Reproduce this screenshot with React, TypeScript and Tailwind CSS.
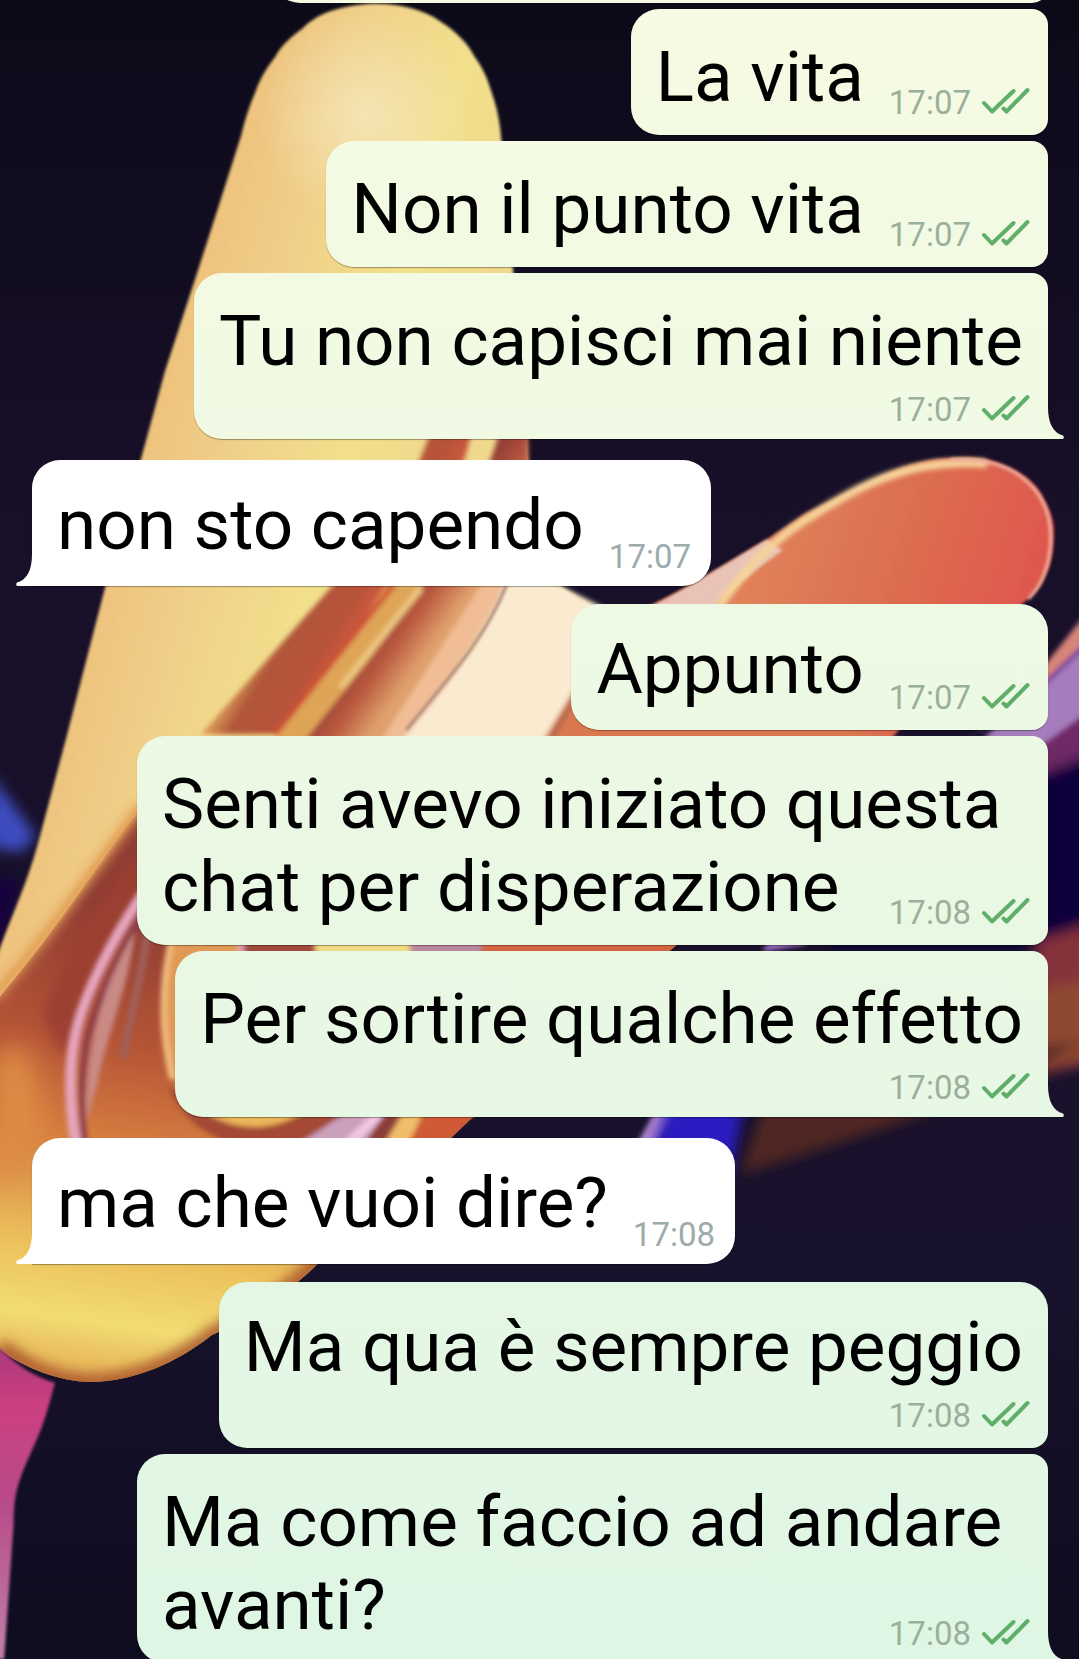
import React from 'react';

type Message = {
  lines: string[];
  time: string;
  out?: boolean;
  first?: boolean;
  last?: boolean;
  stacked?: boolean;
  tail?: string;
};

const messages: Message[] = [
  { lines: ['La vita'], time: '17:07', out: true },
  { lines: ['Non il punto vita'], time: '17:07', out: true },
  { lines: ['Tu non capisci mai niente'], time: '17:07', out: true, last: true, stacked: true, tail: 'fill-[#f0fae3]' },
  { lines: ['non sto capendo'], time: '17:07', first: true, last: true, tail: 'fill-white' },
  { lines: ['Appunto'], time: '17:07', out: true, first: true },
  { lines: ['Senti avevo iniziato questa', 'chat per disperazione'], time: '17:08', out: true },
  { lines: ['Per sortire qualche effetto'], time: '17:08', out: true, last: true, stacked: true, tail: 'fill-[#e7f7e4]' },
  { lines: ['ma che vuoi dire?'], time: '17:08', first: true, last: true, tail: 'fill-white' },
  { lines: ['Ma qua è sempre peggio'], time: '17:08', out: true, first: true, stacked: true },
  { lines: ['Ma come faccio ad andare', 'avanti?'], time: '17:08', out: true, last: true, tail: 'fill-[#dff6e4]' },
];

const outBg = 'bg-linear-to-b from-[#f6fbe3] to-[#dff6e4] bg-fixed';

const ReadIcon: React.FC = () => (
  <svg viewBox="0 0 48 28" className="w-12 h-7 mb-2 shrink-0" fill="none" stroke="#5fae6a" strokeWidth="4" strokeLinecap="round" strokeLinejoin="round">
    <path d="M2 16 L10 24.5 L31.5 4" />
    <path d="M21.5 21.5 L24.5 24.5 L45.5 3" />
  </svg>
);

const Bubble: React.FC<{ message: Message }> = ({ message }) => {
  const { lines, time, out, first, last, stacked, tail } = message;

  let corners = 'rounded-[28px]';
  if (out) {
    corners = `rounded-l-[28px] ${first ? 'rounded-tr-[28px]' : 'rounded-tr-2xl'} ${last ? '' : 'rounded-br-2xl'}`;
  } else if (last) {
    corners = 'rounded-t-[28px] rounded-br-[28px]';
  }

  return (
    <div
      className={`relative flex justify-between shadow-[0_1px_1px_rgba(0,0,0,0.35)] ${corners} ${out ? outBg : 'bg-white'} ${
        stacked ? 'flex-col' : 'items-end'
      } ${lines.length > 1 ? 'w-[911px]' : ''}`}
    >
      <p
        className={`shrink-0 pl-[25px] text-[71px] leading-[83px] whitespace-nowrap text-black ${first ? 'pt-[23px]' : 'pt-[26px]'} ${
          stacked ? 'pr-[25px] pb-2' : first ? 'pb-5' : 'pb-[17px]'
        }`}
      >
        {lines.map((line) => (
          <span key={line} className="block">{line}</span>
        ))}
      </p>
      <div
        className={`flex shrink-0 items-end justify-end gap-[11px] ${lines.length > 1 ? '-ml-36' : 'pl-[25px]'} ${out ? 'pr-[18px]' : 'pr-5'} ${
          last ? 'pb-[9px]' : 'pb-3'
        }`}
      >
        <time className={`text-[33px] leading-10 ${out ? 'text-[#9bb09b]' : 'text-[#9dabab]'}`}>{time}</time>
        {out && <ReadIcon />}
      </div>
      {tail && (
        <svg
          viewBox="0 0 16 32"
          className={`absolute bottom-0 w-4 h-8 ${out ? 'left-full' : 'right-full -scale-x-100'} ${tail}`}
        >
          <path d="M0 0 C0 16 5 26 15 28.5 Q16.5 30 15 32 H0 Z" />
        </svg>
      )}
    </div>
  );
};

const Wallpaper: React.FC = () => (
  <svg viewBox="0 0 1020 1568" preserveAspectRatio="xMidYMid slice" className="absolute inset-0 w-full h-full">
    <defs>
      <linearGradient id="night" x1="0" y1="0" x2="0" y2="1">
        <stop offset="0" stopColor="#0c0a19" />
        <stop offset="0.3" stopColor="#180f28" />
        <stop offset="0.75" stopColor="#19122d" />
        <stop offset="1" stopColor="#0e0c1f" />
      </linearGradient>
      <linearGradient id="petal" gradientUnits="userSpaceOnUse" x1="150" y1="300" x2="420" y2="380">
        <stop offset="0" stopColor="#edbf7a" />
        <stop offset="0.35" stopColor="#f0cf88" />
        <stop offset="0.75" stopColor="#f2e08c" />
        <stop offset="1" stopColor="#f0d98c" />
      </linearGradient>
      <radialGradient id="shine" gradientUnits="userSpaceOnUse" cx="345" cy="110" r="100">
        <stop offset="0" stopColor="#f6ebc8" stopOpacity="0.7" />
        <stop offset="1" stopColor="#f6ebc8" stopOpacity="0" />
      </radialGradient>
      <linearGradient id="lobe" gradientUnits="userSpaceOnUse" x1="130" y1="860" x2="70" y2="1290">
        <stop offset="0" stopColor="#8f3c33" />
        <stop offset="0.3" stopColor="#b55536" />
        <stop offset="0.5" stopColor="#d57c3f" />
        <stop offset="0.75" stopColor="#ecc15c" />
        <stop offset="0.9" stopColor="#f2dc72" />
        <stop offset="1" stopColor="#e8b85a" />
      </linearGradient>
      <linearGradient id="red" gradientUnits="userSpaceOnUse" x1="720" y1="480" x2="970" y2="560">
        <stop offset="0" stopColor="#e0825a" />
        <stop offset="0.5" stopColor="#dc6f50" />
        <stop offset="1" stopColor="#df5850" />
      </linearGradient>
      <linearGradient id="foldA" gradientUnits="userSpaceOnUse" x1="245" y1="610" x2="310" y2="650">
        <stop offset="0" stopColor="#dc9a58" />
        <stop offset="0.25" stopColor="#b0563a" />
        <stop offset="0.7" stopColor="#b8523a" />
        <stop offset="1" stopColor="#d05c3e" />
      </linearGradient>
      <linearGradient id="foldB" gradientUnits="userSpaceOnUse" x1="335" y1="610" x2="385" y2="645">
        <stop offset="0" stopColor="#8f3a34" />
        <stop offset="0.5" stopColor="#b9583f" />
        <stop offset="1" stopColor="#e0a06c" />
      </linearGradient>
      <linearGradient id="pink" x1="0" y1="0" x2="0" y2="1">
        <stop offset="0" stopColor="#a8387c" />
        <stop offset="0.2" stopColor="#cc4080" />
        <stop offset="0.5" stopColor="#b84a88" />
        <stop offset="1" stopColor="#c080a8" />
      </linearGradient>
      <filter id="soft">
        <feGaussianBlur stdDeviation="1.5" />
      </filter>
      <filter id="fold">
        <feGaussianBlur stdDeviation="2.5" />
      </filter>
      <filter id="blurry" x="-50%" y="-50%" width="200%" height="200%">
        <feGaussianBlur stdDeviation="6" />
      </filter>
      <filter id="glow" x="-50%" y="-50%" width="200%" height="200%">
        <feGaussianBlur stdDeviation="12" />
      </filter>
      <clipPath id="lobeClip">
        <path d="M131 766 C90 820 60 870 0 942 H-5 V1272 C15 1288 45 1303 80 1306 C120 1308 165 1290 200 1262 C240 1245 280 1215 300 1195 C350 1150 400 1100 447 1056 L640 893 L500 710 L194 710Z" />
      </clipPath>
    </defs>
    <rect width="1020" height="1568" fill="url(#night)" />

    {/* ribbon and glow on the right edge */}
    <g filter="url(#blurry)">
      <path d="M1040 700 L990 725 L900 740 L780 893 H1040Z" fill="#10003a" />
      <path d="M1040 870 L980 890 L960 1020 L1040 1004Z" fill="#86303a" />
      <path d="M1040 925 L980 935 L960 1014 L1040 1000Z" fill="#8f4a30" />
      <path d="M1040 650 L985 690 L960 740 L1040 710Z" fill="#6e2c66" />
    </g>
    <g filter="url(#fold)">
      <path d="M1030 576 L980 638 L905 712 L760 893 L720 900 L800 780 L926 692 L975 655Z" fill="#9a6cc0" />
      <path d="M1030 592 L980 650 L915 712 L975 712 L1030 672Z" fill="#a57cbc" />
      <path d="M1030 576 L985 632 L985 646 L1030 602Z" fill="#d88478" />
      <path d="M1030 606 L985 648" stroke="#6f3a9a" strokeWidth="4" />
      <path d="M600 1085 L625 1040 L650 1040 L618 1085Z" fill="#b087cc" />
    </g>
    <path d="M635 1035 L705 1035 L690 1112 L612 1098Z" fill="#2a1cc0" filter="url(#blurry)" />
    <path d="M725 1035 L1020 985 L980 1008 L860 1058 L700 1110Z" fill="#4f2524" filter="url(#blurry)" />

    {/* blue glow behind the left petal */}
    <path d="M-10 730 L34 790 L20 806 L-10 800Z" fill="#3d4cc0" filter="url(#blurry)" />
    <path d="M-10 830 H20 L0 900 H-10Z" fill="#12003c" filter="url(#blurry)" />

    {/* right petal */}
    <path d="M580 590 C600 578 640 562 671 542 L725 510 L762 485 L825 454 C850 441 875 433 898 433 C915 432 932 433 945 438 C965 445 980 457 986 470 C994 484 997 495 996 507 C996 522 993 535 989 542 C984 555 977 563 967 570 L840 700 L620 893 L447 1056 L397 1056 L540 690Z" fill="url(#red)" filter="url(#soft)" />
    <path d="M600 582 C640 562 680 537 725 510 L740 520 C705 545 680 565 660 590Z" fill="#e9c3b8" filter="url(#soft)" />
    <path d="M930 438 C850 432 800 468 760 492 C730 512 700 540 672 585" stroke="#f6d49a" strokeWidth="8" strokeLinecap="round" fill="none" filter="url(#fold)" />
    <path d="M898 435 C960 430 995 465 993 512 C992 535 986 552 972 566" stroke="#eeb0a0" strokeWidth="3" fill="none" filter="url(#soft)" />

    {/* upright petal */}
    <path
      d="M345 4 C375 2 400 9 416 20 C432 30 443 42 449 54 C458 66 462 78 465 88 C471 105 473 120 474 133 L485 255 L498 415 L505 548 L528 553 L570 580 L620 700 L440 893 L-10 960 V925 C8 870 25 840 38 790 L62 700 L100 553 L133 435 L156 351 L189 250 L215 169 L228 128 C232 112 236 100 241 88 C246 74 252 64 260 54 C266 43 276 34 286 27 C300 12 322 6 345 4Z"
      fill="url(#petal)"
      filter="url(#soft)"
    />
    <circle cx="345" cy="110" r="100" fill="url(#shine)" />
    <g filter="url(#fold)">
      <path d="M410 400 L448 400 C425 500 390 540 365 560 L262 694 L190 694 L315 553 C360 510 390 460 410 400Z" fill="url(#foldA)" />
      <path d="M475 400 L500 400 L498 500 L480 553 L384 700 L285 700 L400 553 C440 500 460 450 475 400Z" fill="url(#foldB)" />
      <path d="M365 553 L400 553 L350 622 L288 700 L258 700 L318 625Z" fill="#dfa457" />
      <path d="M372 553 L260 694" stroke="#cf4f36" strokeWidth="5" />
      <path d="M398 556 L322 650" stroke="#edc982" strokeWidth="6" fill="none" />
      <path d="M455 553 L360 700 L390 700 L480 553Z" fill="#f0bd96" />
      <path d="M480 545 L528 553 L568 573 L560 640 L513 700 L380 700 C420 650 455 610 480 545Z" fill="#faead0" />
      <path d="M550 640 L513 700 H860 L640 660Z" fill="#d97850" />
      <path d="M545 655 L520 700" stroke="#a8624a" strokeWidth="4" />
    </g>
    <path d="M480 550 C460 602 425 640 384 690" stroke="#b08a7c" strokeWidth="3" fill="none" filter="url(#soft)" />

    {/* lower lobe */}
    <g clipPath="url(#lobeClip)">
      <rect x="-5" y="680" width="660" height="640" fill="url(#lobe)" />
      <path d="M160 800 C110 860 95 920 60 1000 L40 960 C60 900 100 840 150 790Z" fill="#9c4030" filter="url(#blurry)" />
      <path d="M-5 1005 C20 960 40 1010 40 1080 L-5 1130Z" fill="#dd8b45" filter="url(#glow)" />
      <path d="M0 1272 C20 1290 45 1303 80 1306 C120 1308 165 1290 200 1262 C240 1240 280 1215 310 1185" stroke="#a8532c" strokeWidth="14" fill="none" filter="url(#blurry)" />
      <g filter="url(#fold)">
        <path d="M135 845 C105 890 80 940 72 975 C64 1010 66 1050 72 1080" stroke="#e6a4be" strokeWidth="10" fill="none" />
        <path d="M143 850 C112 905 90 950 82 985 C76 1020 76 1050 80 1080" stroke="#8f3e4c" strokeWidth="6" fill="none" />
        <path d="M128 880 C120 940 100 980 92 1025 L82 1060 C80 1000 92 940 128 880Z" fill="#c98a86" />
        <path d="M140 880 C132 930 124 960 116 1000" stroke="#a0605a" strokeWidth="7" fill="none" />
        <path d="M163 885 H300 L390 1056 H195 C175 1045 162 1020 158 1000 C152 965 154 930 163 885Z" fill="#e09a55" />
        <path d="M163 885 C152 930 152 975 163 1020" stroke="#f3bd80" strokeWidth="6" fill="none" />
        <path d="M225 885 H298 V905 H225Z" fill="#a04c3c" />
        <path d="M228 885 V905" stroke="#e0a0b0" strokeWidth="6" />
        <path d="M296 885 H388 V905 H300Z" fill="#f0dc85" />
        <path d="M388 885 H455 V905 H388Z" fill="#b887a0" />
        <path d="M455 885 H650 V905 H455Z" fill="#d4653f" />
        <path d="M160 1030 H420 L370 1085 H240 C200 1080 175 1060 160 1030Z" fill="#a34a35" />
        <path d="M190 1040 H300 C270 1072 220 1072 190 1048Z" fill="#ecb65a" />
        <path d="M284 1080 L330 1050 H385 L345 1080Z" fill="#cba0bb" />
        <path d="M330 1080 L362 1050" stroke="#f0c8e4" strokeWidth="9" />
        <path d="M345 1080 L365 1050 H385 L366 1080Z" fill="#8f3e38" />
        <path d="M364 1080 L382 1050 H400 L388 1080Z" fill="#f0bd6a" />
        <path d="M386 1080 L402 1050 H452 L430 1080Z" fill="#cf5a36" />
      </g>
    </g>
    <path d="M136 758 C90 816 56 872 -8 944" stroke="#e6a45c" strokeWidth="9" fill="none" filter="url(#blurry)" />
    <path d="M136 758 C90 816 56 872 -8 944" stroke="#e3a058" strokeWidth="5" fill="none" filter="url(#fold)" />

    <path d="M-4 1270 C15 1290 30 1300 52 1307 C48 1322 44 1338 38 1353 C30 1372 24 1384 19 1398 C14 1412 13 1425 13 1440 L4 1568 H-4Z" fill="url(#pink)" filter="url(#soft)" />
  </svg>
);

const App: React.FC = () => (
  <main className="relative h-screen overflow-hidden bg-[#140f26] font-[Roboto,sans-serif]">
    <Wallpaper />
    <div className="relative flex flex-col -mt-[123px] pl-8 pr-[31px]">
      {/* message scrolled off the top edge */}
      <div className={`self-end shrink-0 w-[776px] h-[126px] rounded-l-[28px] rounded-r-2xl ${outBg}`} />
      {messages.map((message, i) => {
        const previous = messages[i - 1];
        const gap = !message.first ? 'mt-1.5' : previous?.out ? 'mt-[21px]' : 'mt-[18px]';
        return (
          <div key={i} className={`flex ${gap} ${message.out ? 'justify-end' : 'justify-start'}`}>
            <Bubble message={message} />
          </div>
        );
      })}
    </div>
  </main>
);

export default App;
